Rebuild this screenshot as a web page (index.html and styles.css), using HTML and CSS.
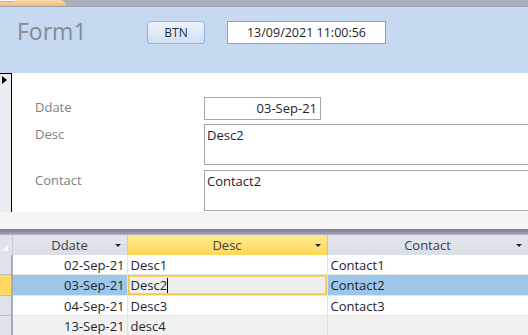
FILE: index.html
```html
<!DOCTYPE html>
<html>
<head>
<meta charset="utf-8">
<title>Form1</title>
<link rel="stylesheet" href="styles.css">
</head>
<body>
<div class="app">
  <div class="tabstrip"><div class="tab"><span class="tab-mark"></span></div></div>
  <div class="header">
    <div class="title">Form1</div>
    <button class="btn">BTN</button>
    <div class="datebox">13/09/2021 11:00:56</div>
  </div>
  <div class="detail">
    <div class="recsel"><span class="pointer"></span></div>
    <div class="fields">
      <div class="label l-date">Ddate</div>
      <div class="box box-date">03-Sep-21</div>
      <div class="label">Desc</div>
      <div class="box box-memo">Desc2</div>
      <div class="label l-contact">Contact</div>
      <div class="box box-memo box-contact">Contact2</div>
    </div>
  </div>
  <div class="splitgap"></div>
  <div class="splitter"></div>
  <table class="sheet">
    <colgroup>
      <col class="c-sel"><col class="c-date"><col class="c-desc"><col class="c-contact">
    </colgroup>
    <thead>
      <tr>
        <th class="corner"><span class="corner-mark"></span></th>
        <th><span class="hd">Ddate</span><span class="arrow"></span></th>
        <th class="hd-active"><span class="hd">Desc</span><span class="arrow"></span></th>
        <th><span class="hd">Contact</span><span class="arrow"></span></th>
      </tr>
    </thead>
    <tbody>
      <tr>
        <td class="sel"></td><td class="num">02-Sep-21</td><td>Desc1</td><td>Contact1</td>
      </tr>
      <tr class="alt current">
        <td class="sel sel-cur"></td><td class="num hl">03-Sep-21</td><td class="edit">Desc2<span class="caret"></span></td><td class="hl">Contact2</td>
      </tr>
      <tr>
        <td class="sel"></td><td class="num">04-Sep-21</td><td>Desc3</td><td>Contact3</td>
      </tr>
      <tr class="alt">
        <td class="sel"></td><td class="num">13-Sep-21</td><td>desc4</td><td></td>
      </tr>
    </tbody>
  </table>
</div>
</body>
</html>
```
FILE: styles.css
```css
html, body {
  margin: 0;
  padding: 0;
}
body {
  width: 528px;
  height: 335px;
  overflow: hidden;
  background: #ffffff;
  font-family: "Open Sans", "Noto Sans", sans-serif;
}
.app {
  width: 528px;
  height: 335px;
  display: flex;
  flex-direction: column;
}

/* top tab strip */
.tabstrip {
  height: 6px;
  flex-shrink: 0;
  background: #aab1bd;
  border-bottom: 1px solid #9aa2b0;
  display: flex;
}
.tab {
  position: relative;
  width: 66px;
  height: 6px;
  background: linear-gradient(#f6d9ad, #f1bd78);
  border-top-right-radius: 8px;
}
.tab-mark {
  position: absolute;
  left: 0;
  top: 0;
  width: 14px;
  height: 1px;
  background: #ffffff;
  border-bottom: 1px solid #9fb6d6;
}

/* form header */
.header {
  height: 66px;
  flex-shrink: 0;
  background: #c6d9f0;
  display: flex;
  align-items: flex-start;
}
.title {
  margin: 9px 0 0 17px;
  width: 130px;
  font-size: 23px;
  line-height: 30px;
  color: #838b94;
  letter-spacing: 0;
}
.btn {
  margin: 14px 0 0 0;
  width: 58px;
  height: 23px;
  border: 1px solid #94b2da;
  border-radius: 3px;
  background: linear-gradient(#eef3fb, #d2e0f3);
  font-family: "Open Sans", sans-serif;
  font-size: 12px;
  color: #1f2a38;
  padding: 0;
}
.datebox {
  margin: 14px 0 0 22px;
  width: 159px;
  height: 23px;
  box-sizing: border-box;
  border: 1px solid #a0a0a0;
  background: #ffffff;
  font-size: 12.5px;
  line-height: 21px;
  text-align: center;
  color: #1e1e1e;
}

/* detail section */
.detail {
  height: 139px;
  flex-shrink: 0;
  display: flex;
  background: #ffffff;
  overflow: hidden;
}
.recsel {
  position: relative;
  flex: 0 0 11px;
  background: #e8edf3;
  border-top: 1px solid #000;
  border-right: 1px solid #000;
}
.pointer {
  position: absolute;
  left: 2px;
  top: 2px;
  width: 0;
  height: 0;
  border-top: 4px solid transparent;
  border-bottom: 4px solid transparent;
  border-left: 5px solid #000;
}
.fields {
  flex: 0 0 auto;
  display: grid;
  grid-template-columns: 169px 330px;
  row-gap: 4px;
  padding: 24px 0 0 23px;
  align-content: start;
}
.label {
  font-size: 13px;
  color: #7f7f7f;
  line-height: 18px;
  padding-top: 1px;
}
.l-contact {
  padding-top: 2px;
}
.box {
  box-sizing: border-box;
  border: 1px solid #a6a6a6;
  border-right: none;
  font-size: 13px;
  line-height: 18px;
  color: #1e2430;
  padding: 1px 2px 0 2px;
}
.box-date {
  width: 117px;
  height: 23px;
  border-right: 1px solid #a6a6a6;
  text-align: right;
  padding-right: 3px;
}
.box-memo {
  height: 41px;
  width: 330px;
}
.box-contact {
  margin-top: 1px;
}

/* split bar */
.splitgap {
  height: 17px;
  flex-shrink: 0;
  background: #f5f5f5;
}
.splitter {
  height: 6px;
  flex-shrink: 0;
  background: linear-gradient(#7a7893, #9593ab 60%, #b8b7c8);
}

/* datasheet */
.sheet {
  border-collapse: collapse;
  table-layout: fixed;
  width: 528px;
  font-size: 13px;
  color: #1e2430;
}
.c-sel { width: 12px; }
.c-date { width: 115px; }
.c-desc { width: 200px; }
.c-contact { width: 201px; }
.sheet th {
  height: 20px;
  padding: 0;
  position: relative;
  font-weight: normal;
  font-size: 13px;
  color: #3a3f4a;
  background: linear-gradient(#e4e7ec, #dadee5);
  border-right: 1px solid #c9ced6;
  text-align: center;
}
.sheet th.hd-active {
  background: linear-gradient(#ffe98f, #ffd85a);
  border-right-color: #e9c45a;
}
.sheet th.corner {
  background: #e0e4ea;
  border-right: 1px solid #c9ced6;
}
.corner-mark {
  position: absolute;
  left: 2px;
  bottom: 4px;
  width: 0;
  height: 0;
  border-left: 6px solid transparent;
  border-bottom: 6px solid #f4f6f9;
}
.arrow {
  position: absolute;
  right: 6px;
  top: 9px;
  width: 0;
  height: 0;
  border-left: 3px solid transparent;
  border-right: 3px solid transparent;
  border-top: 3px solid #222;
}
.sheet td {
  height: 19px;
  padding: 0 3px;
  line-height: 18px;
  border-bottom: 1px solid #e6e6e3;
  border-right: 1px solid #e1e1de;
  background: #ffffff;
  white-space: nowrap;
  overflow: hidden;
}
.sheet tr.alt td {
  background: #f1f1f1;
}
.sheet td.num {
  text-align: right;
  padding-right: 2px;
}
.sheet td.sel {
  padding: 0;
  background: #dee2e9;
  border-right: 2px solid #a7acb6;
  border-bottom: 1px solid #b9bec7;
}
.sheet tr.alt td.sel {
  background: #dee2e9;
}
.sheet tr.current td.sel-cur {
  background: #ffd961;
}
.sheet tr.current td {
  height: 20px;
}
.sheet tr.current td.hl {
  background: #9dc6e9;
}
.sheet tr.current td.edit {
  background: #efefef;
  box-shadow: inset 0 0 0 1px #f0c94a, inset 0 0 0 2px #f6d66a;
}
.caret {
  display: inline-block;
  width: 1px;
  height: 15px;
  background: #000;
  vertical-align: -3px;
}
```
